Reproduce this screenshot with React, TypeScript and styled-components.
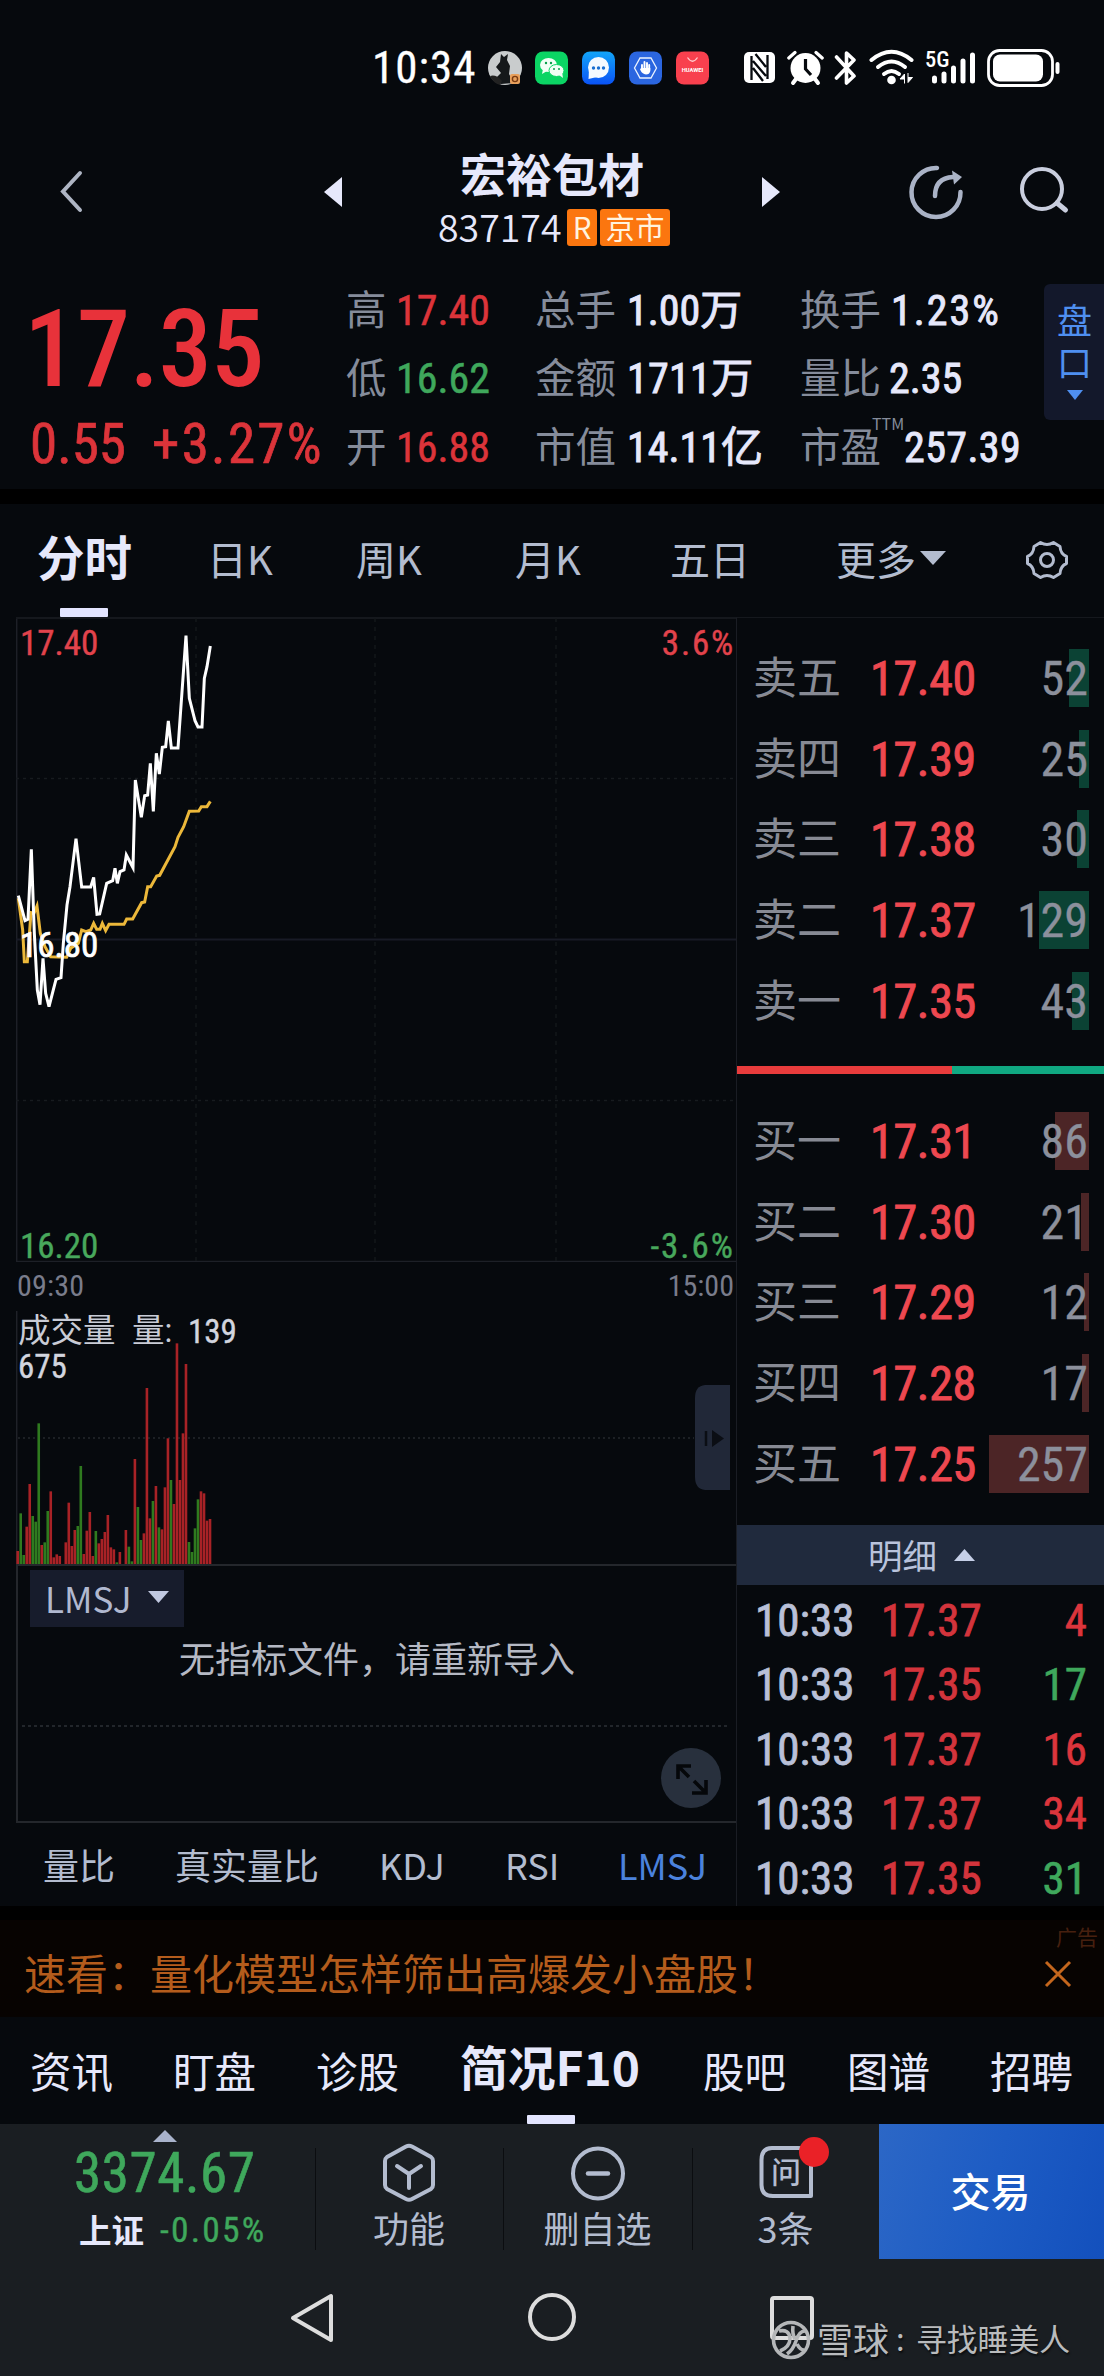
import React from 'react';
import styled, { createGlobalStyle } from 'styled-components';

const NUM = 'Roboto, "Noto Sans CJK SC", sans-serif';
const CJK = '"Noto Sans CJK SC", "Noto Sans", sans-serif';

const c = {
  bg: '#06090d',
  bar: '#1a1e22',
  text: '#e6e8fb',
  soft: '#b3bccf',
  label: '#858c9b',
  red: '#e8323a',
  green: '#3fa85c',
  blue: '#4f8ff0',
  line: '#1a1d24',
};

const Global = createGlobalStyle`
  * { box-sizing: border-box; }
  body { margin: 0; background: ${c.bg}; }
`;

const Screen = styled.div`
  width: 1104px;
  height: 2376px;
  display: flex;
  flex-direction: column;
  background: ${c.bg};
  color: ${c.text};
  font-family: ${CJK};
  line-height: 1;
  white-space: nowrap;
  overflow: hidden;
`;

const Num = styled.span<{ $size: number; $color?: string; $weight?: number; $ls?: number; $stroke?: number }>`
  font-family: ${NUM};
  font-stretch: 75%;
  font-size: ${(p) => p.$size}px;
  font-weight: ${(p) => p.$weight ?? 400};
  color: ${(p) => p.$color ?? c.text};
  letter-spacing: ${(p) => p.$ls ?? 0}px;
  -webkit-text-stroke: ${(p) => p.$stroke ?? 0}px ${(p) => p.$color ?? c.text};
`;

const Gap = styled.div<{ $h: number }>`
  height: ${(p) => p.$h}px;
  flex: none;
  background: #000;
`;

/* ---------- status bar ---------- */

const StatusBar = styled.div`
  height: 104px;
  flex: none;
  padding: 34px 0 0 372px;
  display: flex;
  align-items: flex-start;
`;
const Clock = styled(Num)`
  width: 116px;
  line-height: 68px;
`;
const StatusIcon = styled.svg<{ $w: number; $gap?: number }>`
  flex: none;
  width: ${(p) => p.$w}px;
  height: 68px;
  margin-right: ${(p) => p.$gap ?? 0}px;
`;

function StatusIcons() {
  return (
    <>
      <StatusIcon $w={34} $gap={13} viewBox="0 0 34 68">
        <circle cx="17" cy="34" r="17" fill="#c9cccd" />
        <path d="M13 20 l3 3 4-3 -1 6 3 6 -1 8 5 9 -13 1 -9-6 5-1 4-4 -5-6 4-5z" fill="#15181a" />
        <path d="M2 42 Q8 40 14 47 L12 51 Q5 49 2 42z" fill="#222" />
        <rect x="22" y="40" width="10" height="10" rx="2" fill="#e8a05c" />
        <circle cx="27" cy="45" r="2.600" fill="none" stroke="#7a3b12" strokeWidth="1.400" />
      </StatusIcon>
      <StatusIcon $w={34} $gap={13} viewBox="0 0 34 68">
        <rect y="17.500" width="33" height="33" rx="8" fill="#0bd564" />
        <ellipse cx="13.500" cy="31" rx="8.500" ry="7" fill="#f2fff6" />
        <path d="M8 35 l-1 5 5-3z" fill="#f2fff6" />
        <ellipse cx="21.500" cy="36.500" rx="7.500" ry="6" fill="#f2fff6" stroke="#0bd564" strokeWidth="1" />
        <path d="M24 41 l4 3 -1-6z" fill="#f2fff6" />
        <g fill="#0a9f4b">
          <circle cx="11" cy="29" r="1.200" />
          <circle cx="16" cy="29" r="1.200" />
          <circle cx="19" cy="35" r="1" />
          <circle cx="24" cy="35" r="1" />
        </g>
      </StatusIcon>
      <StatusIcon $w={34} $gap={13} viewBox="0 0 34 68">
        <defs>
          <linearGradient id="msg" x1="0" y1="0" x2="0" y2="1">
            <stop offset="0" stopColor="#12a5f8" />
            <stop offset="1" stopColor="#0a52f5" />
          </linearGradient>
        </defs>
        <rect y="17.500" width="33" height="33" rx="8" fill="url(#msg)" />
        <circle cx="16.500" cy="33.500" r="10.500" fill="#f4faff" />
        <path d="M7 36 L6.500 45 L15 43z" fill="#f4faff" />
        <g fill="#1a6fd0">
          <circle cx="11.500" cy="34" r="1.700" />
          <circle cx="16.500" cy="34" r="1.700" />
          <circle cx="21.500" cy="34" r="1.700" />
        </g>
      </StatusIcon>
      <StatusIcon $w={34} $gap={13} viewBox="0 0 34 68">
        <rect y="17.500" width="33" height="33" rx="8" fill="#2b66e0" />
        <path d="M11 24 H22 L27.500 34 L22 44 H11 L5.500 34 Z" fill="none" stroke="#eaf2ff" strokeWidth="1.300" />
        <path d="M13 31 V36 M15.500 28 V35 M18 29 V35 M20.200 31 V36" stroke="#fff" strokeWidth="1.900" strokeLinecap="round" />
        <path d="M12 34 H21.300 V37 Q20.500 40.500 17 40.500 Q13 40 11 35.500z" fill="#fff" />
      </StatusIcon>
      <StatusIcon $w={34} $gap={34} viewBox="0 0 34 68">
        <rect y="17.500" width="33" height="33" rx="8" fill="#f8404e" />
        <path d="M11.500 23.500 Q16.500 31 21.500 23.500" fill="none" stroke="#ffc9cc" strokeWidth="1.300" />
        <text x="16.500" y="38" textAnchor="middle" fontFamily="Roboto, sans-serif" fontWeight="700" fontSize="5.800" fill="#fff">
          HUAWEI
        </text>
      </StatusIcon>
      <StatusIcon $w={31} $gap={12} viewBox="0 0 31 68">
        <rect y="18" width="31" height="31" rx="5" fill="#fff" />
        <path d="M7.500 46 V22 M23.500 45 V21 M11.500 20 L22 33 M9 27 L22 42 M9 34 L19 47" fill="none" stroke={c.bg} strokeWidth="2.300" />
      </StatusIcon>
      <StatusIcon $w={37} $gap={10} viewBox="0 0 37 68">
        <circle cx="18.500" cy="34" r="15" fill="#fff" />
        <path d="M1.800 24 L8 18.500 M29 18.500 L35.200 24" stroke="#fff" strokeWidth="3.200" strokeLinecap="round" />
        <path d="M9 45 L6 49 M28 45 L31 49" stroke="#fff" strokeWidth="4" strokeLinecap="round" />
        <path d="M18.500 25 V35 L24 41" fill="none" stroke={c.bg} strokeWidth="3.200" />
      </StatusIcon>
      <StatusIcon $w={25} $gap={10} viewBox="0 0 25 68">
        <path d="M2.500 23 L20 42 L12.500 49 V19 L20 26 L2.500 44" fill="none" stroke="#fff" strokeWidth="3.600" strokeLinejoin="round" strokeLinecap="round" />
      </StatusIcon>
      <StatusIcon $w={46} $gap={10} viewBox="0 0 46 68">
        <g fill="none" stroke="#fff" strokeWidth="4" strokeLinecap="round">
          <path d="M2.500 26 Q22.500 9.500 42.500 26" />
          <path d="M9 33 Q22.500 22 36 33" />
          <path d="M15 40 Q22.500 34 30 40" />
        </g>
        <circle cx="22.500" cy="46" r="4.300" fill="#fff" />
        <path d="M35.500 49.500 V40 L31 45 H35.500 M39 39 V48.500 L43.500 43.500 H39" fill="#fff" stroke="#fff" strokeWidth="1" />
      </StatusIcon>
      <StatusIcon $w={51} $gap={11} viewBox="0 0 51 68">
        <text x="0" y="33" fontFamily="Roboto, sans-serif" fontStretch="75%" fontWeight="500" fontSize="22.500" fill="#fff">
          5G
        </text>
        <path d="M9.500 46 V43 M19 46 V39 M28.500 46 V33 M38 46 V26 M47.500 46 V20" transform="translate(0 1)" stroke="#fff" strokeWidth="5" strokeLinecap="round" />
      </StatusIcon>
      <StatusIcon $w={74} viewBox="0 0 74 68">
        <rect x="1.500" y="16.500" width="64" height="35" rx="11" fill="none" stroke="#fff" strokeWidth="2.800" />
        <rect x="6" y="20.500" width="50" height="27" rx="7" fill="#fff" />
        <rect x="68.500" y="28" width="4" height="12" rx="2" fill="#fff" />
      </StatusIcon>
    </>
  );
}

/* ---------- header ---------- */

const Header = styled.header`
  height: 156px;
  flex: none;
  display: grid;
  grid-template-columns: 324px 114px 232px 92px 144px 112px 86px;
`;
const HeadIcon = styled.svg`
  width: 100%;
  height: 156px;
`;
const TitleBox = styled.div`
  padding-top: 43px;
`;
const Title = styled.h1`
  margin: 0 0 0 22px;
  font-size: 46px;
  line-height: 50px;
  font-weight: 700;
`;
const CodeRow = styled.div`
  margin-top: 12px;
  height: 37px;
  display: flex;
  align-items: center;
`;
const Code = styled.span`
  width: 129px;
  flex: none;
  font-size: 37.500px;
  line-height: 37px;
  height: 42px;
  font-weight: 350;
`;
const Badge = styled.span<{ $w: number }>`
  width: ${(p) => p.$w}px;
  flex: none;
  height: 37px;
  margin-right: 3px;
  border-radius: 3px;
  background: #fb760f;
  color: #fff3df;
  font-size: 29.500px;
  line-height: 34px;
  text-align: center;
`;

/* ---------- quote ---------- */

const Quote = styled.section`
  height: 229px;
  flex: none;
  display: grid;
  grid-template-columns: 346px 189px 265px 244px 60px;
`;
const PriceBox = styled.div`
  padding: 27px 0 0 24px;
  display: flex;
  flex-direction: column;
`;
const BigPrice = styled(Num)`
  line-height: 126px;
`;
const Change = styled.div`
  display: grid;
  grid-template-columns: 122px auto;
  margin: 1px 0 0 6px;
  line-height: 60px;
`;
const Stats = styled.div`
  padding-top: 16.500px;
  display: flex;
  flex-direction: column;
`;
const Stat = styled.div<{ $lw: number }>`
  height: 68.500px;
  display: grid;
  grid-template-columns: ${(p) => p.$lw}px auto;
  align-items: center;
`;
const StatLabel = styled.span`
  position: relative;
  font-family: ${NUM};
  font-size: 40.500px;
  color: ${c.label};
`;
const Ttm = styled.sup`
  position: absolute;
  left: 72px;
  top: -13px;
  font-size: 16px;
  font-weight: 400;
  line-height: 16px;
  font-family: "Noto Sans CJK SC", sans-serif;
`;
const SideTab = styled.div`
  height: 136px;
  margin-top: 24px;
  padding-top: 14px;
  border-radius: 6px 0 0 6px;
  background: #13182b;
  color: ${c.blue};
  display: flex;
  flex-direction: column;
  align-items: center;
  font-size: 35px;
  line-height: 42px;
  padding-left: 1px;
`;
const SideArrow = styled.svg`
  width: 16px;
  height: 10px;
  margin-top: 8px;
`;

/* ---------- period tabs ---------- */

const Periods = styled.nav`
  height: 113px;
  flex: none;
  display: grid;
  grid-template-columns: 170px 149px 159px 155px 166px 190px 1fr;
  padding-left: 37px;
`;
const Period = styled.div<{ $on?: boolean }>`
  height: 113px;
  display: flex;
  flex-direction: column;
  font-size: ${(p) => (p.$on ? 47.5 : 40)}px;
  font-weight: ${(p) => (p.$on ? 700 : 400)};
  color: ${(p) => (p.$on ? c.text : c.soft)};
  line-height: 104px;
  padding-top: ${(p) => (p.$on ? 0 : 2)}px;
`;
const Inline = styled.div`
  display: flex;
  align-items: center;
`;
const Underline = styled.i<{ $ml?: number }>`
  display: block;
  width: 48px;
  height: 9px;
  margin-left: ${(p) => p.$ml ?? 0}px;
  background: #e3e5ff;
  flex: none;
  border-radius: 1px;
`;
const Drop = styled.svg`
  width: 26px;
  height: 14px;
  margin-left: 4px;
`;
const GearBox = styled.svg`
  width: 44px;
  height: 44px;
  margin: 34px 0 0 -1px;
`;

/* ---------- main area ---------- */

const Main = styled.main`
  height: 1289px;
  flex: none;
  display: grid;
  grid-template-columns: 736px 368px;
`;
const ChartCol = styled.div`
  display: flex;
  flex-direction: column;
  padding-left: 16px;
`;
const PriceChart = styled.div`
  position: relative;
  height: 645px;
`;
const Plot = styled.svg`
  display: block;
  width: 720px;
  height: 100%;
`;
const AxisLabel = styled(Num)<{ $side: 'l' | 'r'; $top: number }>`
  position: absolute;
  top: ${(p) => p.$top}px;
  ${(p) => (p.$side === 'l' ? 'left: 4px;' : 'right: 1px;')}
`;
const TimeAxis = styled.div`
  height: 49px;
  padding: 9px 2px 0 1px;
  display: flex;
  justify-content: space-between;
`;
const Volume = styled.div`
  position: relative;
  height: 254px;
`;
const VolumeText = styled.div`
  position: absolute;
  left: 2px;
  top: 3px;
`;
const VolumeRow = styled.div`
  height: 35px;
  display: flex;
  align-items: center;
  font-size: 32.500px;
  color: #c9ccd6;
`;
const VolLabel = styled.span<{ $w: number }>`
  font-family: ${NUM};
  width: ${(p) => p.$w}px;
`;
const PullTab = styled.svg`
  position: absolute;
  left: 679px;
  top: 74px;
  width: 35px;
  height: 105px;
`;
const Indicator = styled.div`
  position: relative;
  height: 259px;
  border: 2px solid #24272c;
  border-right: 0;
  margin-top: -1px;
`;
const Picker = styled.button`
  width: 154px;
  height: 57px;
  margin: 4px 0 0 12px;
  padding: 0 0 0 15px;
  border: 0;
  background: #171c2c;
  color: #b0b8d0;
  font: 400 35px/52px ${CJK};
  display: flex;
  align-items: center;
  padding-bottom: 2px;
`;
const PickerArrow = styled.svg`
  width: 21px;
  height: 12px;
  margin: 0 0 2px 16px;
`;
const Notice = styled.p`
  margin: 7px 0 0 161px;
  font-size: 36px;
  line-height: 46px;
  color: #b5b9c4;
`;
const Dotted = styled.div`
  margin: 45px 6px 0 4px;
  height: 2px;
  background: repeating-linear-gradient(90deg, #22262b 0 3px, transparent 3px 6px);
`;
const Expand = styled.svg`
  position: absolute;
  left: 643px;
  top: 182px;
  width: 60px;
  height: 60px;
`;
const IndTabs = styled.div`
  flex: 1;
  display: grid;
  grid-template-columns: 132px 204px 126px 113px auto;
  padding: 0 0 8px 27px;
  align-items: center;
`;
const IndTab = styled.span<{ $on?: boolean }>`
  font-size: 36px;
  color: ${(p) => (p.$on ? '#4b82dc' : c.soft)};
`;

/* ---------- order book ---------- */

const Book = styled.aside`
  display: flex;
  flex-direction: column;
  border-left: 1px solid ${c.line};
  border-top: 1px solid #15181d;
  border-bottom: 2px solid #1c1f22;
`;
const Levels = styled.div<{ $top: number; $h: number }>`
  height: ${(p) => p.$h}px;
  padding-top: ${(p) => p.$top}px;
`;
const Level = styled.div`
  height: 80.600px;
  display: grid;
  grid-template-columns: 117px 121px 97px;
  padding-left: 16px;
  align-items: center;
`;
const LevelName = styled.span`
  font-family: ${NUM};
  font-size: 44px;
  padding-top: 2px;
  color: #878a94;
`;
const LevelPrice = styled(Num)`
  padding-top: 2px;
`;
const LevelVol = styled.div`
  position: relative;
  height: 58px;
  line-height: 60px;
  text-align: right;
`;
const VolBar = styled.i<{ $buy?: boolean }>`
  position: absolute;
  right: -1px;
  top: 0;
  height: 58px;
  background: ${(p) => (p.$buy ? '#4c2526' : '#0b4234')};
`;
const VolNum = styled(Num)`
  position: relative;
`;
const Split = styled.div`
  display: grid;
  grid-template-columns: 215px 1fr;
  height: 8px;
`;
const SplitPart = styled.i<{ $c: string }>`
  background: ${(p) => p.$c};
`;
const DetailHead = styled.div`
  height: 60px;
  display: flex;
  align-items: center;
  padding: 0 0 3px 131px;
  background: #202a3d;
  color: #b9c3dc;
  font-size: 34.500px;
  line-height: 54px;
`;
const DetailArrow = styled.svg`
  width: 21px;
  height: 12px;
  margin: 2px 0 0 17px;
`;
const Trades = styled.div`
  padding-top: 3px;
`;
const Trade = styled.div`
  height: 64.500px;
  display: grid;
  grid-template-columns: 126px 120px 86px;
  padding-left: 18px;
  align-items: center;
`;
const TradeVol = styled(Num)`
  text-align: right;
`;

/* ---------- advert ---------- */

const Advert = styled.section`
  height: 97px;
  flex: none;
  display: grid;
  grid-template-columns: 1044px 60px;
  background: #070301;
`;
const AdText = styled.span`
  padding-left: 24px;
  font-size: 42px;
  line-height: 103px;
  color: #b45c1c;
`;
const AdSide = styled.div`
  display: flex;
  flex-direction: column;
  padding-top: 5px;
  font-size: 21px;
  line-height: 23px;
  color: #47200f;
`;
const AdTag = styled.span`
  padding-left: 12px;
`;
const AdClose = styled.svg`
  width: 28px;
  height: 28px;
  margin-top: 12px;
`;

/* ---------- section tabs ---------- */

const Sections = styled.nav`
  height: 107px;
  flex: none;
  padding-left: 30px;
  display: grid;
  grid-template-columns: 143px 143px 144px 243px 144px 143px auto;
`;
const Section = styled.div<{ $on?: boolean }>`
  font-size: ${(p) => (p.$on ? 47.8 : 41.5)}px;
  font-weight: ${(p) => (p.$on ? 700 : 400)};
  line-height: 98px;
  padding-top: ${(p) => (p.$on ? 0 : 4)}px;
  height: 107px;
  overflow: hidden;
  display: flex;
  flex-direction: column;
`;

/* ---------- bottom bar ---------- */

const Bottom = styled.footer`
  height: 135px;
  flex: none;
  background: ${c.bar};
  display: grid;
  grid-template-columns: 315px 188px 189px 187px 225px;
`;
const IndexBox = styled.div`
  display: flex;
  flex-direction: column;
  padding: 6px 0 0 74px;
`;
const IndexArrow = styled.svg`
  width: 24px;
  height: 12px;
  margin: 0 0 1px 79px;
`;
const IndexValue = styled(Num)`
  line-height: 60px;
`;
const IndexRow = styled.div`
  display: grid;
  grid-template-columns: 81px auto;
  align-items: center;
  padding-left: 5px;
  line-height: 48px;
`;
const IndexName = styled.b`
  font-family: ${NUM};
  font-size: 32.500px;
  padding-top: 5px;
`;
const Action = styled.div`
  position: relative;
  display: flex;
  flex-direction: column;
  align-items: center;
  padding-top: 18px;
  font-size: 36px;
  line-height: 50px;
  color: ${c.soft};
  &::before {
    content: '';
    position: absolute;
    left: 0;
    top: 24px;
    width: 1px;
    height: 102px;
    background: #0b0d10;
  }
`;
const ActionIcon = styled.svg`
  width: 80px;
  height: 60px;
  overflow: visible;
`;
const TradeBtn = styled.button`
  border: 0;
  background: linear-gradient(105deg, #2c67c6 0%, #1d5cc4 50%, #1350bd 100%);
  color: #fff;
  font: 500 40px/130px ${CJK};
  padding: 0 2px 4px 0;
`;

/* ---------- system nav ---------- */

const SysNav = styled.div`
  height: 117px;
  flex: none;
  background: ${c.bar};
  display: grid;
  grid-template-columns: 816px 288px;
`;
const SysIcons = styled.svg`
  width: 816px;
  height: 117px;
`;
const Watermark = styled.div`
  padding: 56px 0 0 1px;
  display: grid;
  grid-template-columns: 72px 27px auto;
  align-content: start;
  align-items: center;
  line-height: 46px;
  color: #b9bbbd;
  font-size: 30.800px;
  text-shadow: 1px 2px 2px rgba(0, 0, 0, 0.6);
`;
const Brand = styled.span`
  font-size: 36px;
`;
const Colon = styled.span`
  padding-left: 7px;
`;

/* ---------- data ---------- */

const sells: [string, string, number][] = [
  ['卖五', '17.40', 52],
  ['卖四', '17.39', 25],
  ['卖三', '17.38', 30],
  ['卖二', '17.37', 129],
  ['卖一', '17.35', 43],
];
const buys: [string, string, number][] = [
  ['买一', '17.31', 86],
  ['买二', '17.30', 21],
  ['买三', '17.29', 12],
  ['买四', '17.28', 17],
  ['买五', '17.25', 257],
];
const trades: [string, string, number, boolean][] = [
  ['10:33', '17.37', 4, true],
  ['10:33', '17.35', 17, false],
  ['10:33', '17.37', 16, true],
  ['10:33', '17.37', 34, true],
  ['10:33', '17.35', 31, false],
];
const priceLine =
  '55,887 75,962 84,958 94,748 103,1000 112,1170 120,1214 129,1075 137,1180 147,1220 168,1138 183,1133 190,1030 201,915 210,860 228,716 245,861 272,861 281,832 291,943 299,942 320,850 338,842 345,805 352,850 360,815 372,810 379,765 399,803 406,540 424,652 434,587 443,585 451,490 460,634 469,460 478,522 487,442 497,440 505,363 514,444 534,444 558,107 568,295 585,362 594,381 606,381 613,235 621,200 631,138';
const avgLine =
  '55,895 68,990 73,1085 82,1085 93,938 102,940 111,918 121,1000 135,1040 152,1070 200,1072 212,1045 235,1030 245,990 258,995 272,990 281,970 290,988 300,988 307,970 317,992 327,973 372,973 380,957 398,957 425,908 434,906 443,860 452,860 470,828 479,826 525,740 534,712 551,680 568,634 596,633 604,620 621,620 631,604';
/* one entry per minute: height in thirds of a pixel, negative for a falling minute */
const volumes = [
  42, -155, -30, 115, 243, -147, -130, -425, 60, -68, -162, 221, 23, 32, 27, -3, 68, 187, 57, 105, -117, -297, 33, 103, 159, 27,
  -102, 65, 78, 99, 150, 53, 47, -8, 39, 3, 105, -55, -11, 318, -174, -75, 95, 531, 140, -192, 237, -113, 107, 233, 380, -255, 183,
  665, 255, 395, 603, -69, -39, -110, -197, 221, 215, 133, 138,
];

function Levels5({ rows, buy, top, h }: { rows: typeof sells; buy?: boolean; top: number; h: number }) {
  return (
    <Levels $top={top} $h={h}>
      {rows.map(([name, price, vol]) => (
        <Level key={name}>
          <LevelName>{name}</LevelName>
          <LevelPrice $size={48} $color="#ee4850" $stroke={0.9} $ls={-0.3}>{price}</LevelPrice>
          <LevelVol>
            <VolBar $buy={buy} style={{ width: Math.round(vol * 0.39) }} />
            <VolNum $size={48} $color="#8c909c" $stroke={0.3}>{vol}</VolNum>
          </LevelVol>
        </Level>
      ))}
    </Levels>
  );
}

interface StatProps {
  lw: number;
  label: string;
  value: string;
  color?: string;
  sup?: string;
  ls?: number;
}

function StatCell({ lw, label, value, color, sup, ls = 0 }: StatProps) {
  return (
    <Stat $lw={lw}>
      <StatLabel>
        {label}
        {sup && <Ttm>{sup}</Ttm>}
      </StatLabel>
      <Num $size={42} $stroke={color ? 0.5 : 0.9} $color={color} $ls={ls}>{value}</Num>
    </Stat>
  );
}

export default function App() {
  return (
    <Screen>
      <Global />
      <StatusBar>
        <Clock $size={45} $color="#fff" $ls={1} $stroke={0.3}>10:34</Clock>
        <StatusIcons />
      </StatusBar>

      <Header>
        <HeadIcon viewBox="0 0 324 156">
          <path d="M80 69 L63 87.500 L80 106" fill="none" stroke="#aeb5c3" strokeWidth="4" strokeLinecap="round" />
        </HeadIcon>
        <HeadIcon viewBox="0 0 114 156">
          <path d="M0 88 L18 73 V103z" fill={c.text} />
        </HeadIcon>
        <TitleBox>
          <Title>宏裕包材</Title>
          <CodeRow>
            <Code>837174</Code>
            <Badge $w={30}>R</Badge>
            <Badge $w={70}>京市</Badge>
          </CodeRow>
        </TitleBox>
        <HeadIcon viewBox="0 0 92 156" />
        <HeadIcon viewBox="0 0 144 156">
          <path d="M18 88 L0 73 V103z" fill={c.text} />
        </HeadIcon>
        <HeadIcon viewBox="906 104 112 156">
          <g fill="none" stroke="#aab3c6" strokeWidth="4.500" strokeLinecap="round">
            <path d="M937 168 A24.500 24.500 0 1 0 960.500 192" />
            <path d="M935 196 Q935 178 953 177" />
          </g>
          <path d="M952 170.500 L962 177 L954 184.500z" fill="#aab3c6" />
        </HeadIcon>
        <HeadIcon viewBox="1018 104 86 156">
          <circle cx="1042" cy="189" r="20" fill="none" stroke="#c9cede" strokeWidth="4" />
          <path d="M1057 203 L1065.500 210" stroke="#c9cede" strokeWidth="5" strokeLinecap="round" />
        </HeadIcon>
      </Header>

      <Quote>
        <PriceBox>
          <BigPrice $size={107} $weight={500} $color={c.red} $ls={-0.8}>17.35</BigPrice>
          <Change>
            <Num $size={55} $color="#dc343a" $stroke={0.7}>0.55</Num>
            <Num $size={55} $color="#dc343a" $stroke={0.7} $ls={2.3}>+3.27%</Num>
          </Change>
        </PriceBox>
        <Stats>
          <StatCell lw={50} label="高" value="17.40" color="#dc343a" />
          <StatCell lw={50} label="低" value="16.62" color={c.green} />
          <StatCell lw={50} label="开" value="16.88" color="#dc343a" />
        </Stats>
        <Stats>
          <StatCell lw={92} label="总手" value="1.00万" />
          <StatCell lw={92} label="金额" value="1711万" ls={0.3} />
          <StatCell lw={92} label="市值" value="14.11亿" />
        </Stats>
        <Stats>
          <StatCell lw={91} label="换手" value="1.23%" ls={2} />
          <StatCell lw={89} label="量比" value="2.35" />
          <StatCell lw={104} label="市盈" value="257.39" sup="TTM" ls={0.4} />
        </Stats>
        <SideTab>
          <span>盘</span>
          <span>口</span>
          <SideArrow viewBox="0 0 16 10">
            <path d="M0 0 H16 L8 10z" fill={c.blue} />
          </SideArrow>
        </SideTab>
      </Quote>
      <Gap $h={15} />

      <Periods>
        <Period $on>
          分时
          <Underline $ml={23} />
        </Period>
        <Period>日K</Period>
        <Period>周K</Period>
        <Period>月K</Period>
        <Period>五日</Period>
        <Period>
          <Inline>
            更多
            <Drop viewBox="0 0 26 14">
              <path d="M0 0 H26 L13 14z" fill={c.soft} />
            </Drop>
          </Inline>
        </Period>
        <GearBox viewBox="0 0 44 44">
          <g fill="none" stroke={c.soft} strokeWidth="3" strokeLinejoin="round">
            <path d="M15.500 4.500 Q22 8.500 28.500 4.500 L35 8.500 Q35.500 16 41.500 18.500 V25.500 Q35.500 28 35 35.500 L28.500 39.500 Q22 35.500 15.500 39.500 L9 35.500 Q8.500 28 2.500 25.500 V18.500 Q8.500 16 9 8.500z" />
            <circle cx="22" cy="22" r="6.500" />
          </g>
        </GearBox>
      </Periods>

      <Main>
        <ChartCol>
          <PriceChart>
            <Plot viewBox="16 617 720 645">
              <g fill="none" strokeWidth="1.500">
                <path d="M16.700 617 V1261.500 H736" stroke="#1d2027" />
                <path d="M16 618 H736" stroke="#15181d" strokeWidth="2" />
                <path d="M16 939.500 H736" stroke="#181b26" strokeWidth="2" />
                <path d="M16 778.500 H736 M16 1100.500 H736" stroke="#171b1f" strokeDasharray="3 4" />
                <path d="M196 618 V1261 M375 618 V1261 M556 618 V1261" stroke="#13171a" strokeDasharray="4 5" />
              </g>
              <g transform="translate(0 600) scale(0.33333)" fill="none" strokeWidth="9" strokeLinejoin="miter">
                <polyline points={avgLine} stroke="#ecb83a" />
                <polyline points={priceLine} stroke="#fff" />
              </g>
            </Plot>
            <AxisLabel $side="l" $top={9} $size={35} $stroke={0.4} $color="#e2434c">17.40</AxisLabel>
            <AxisLabel $side="r" $top={9} $size={35} $stroke={0.4} $ls={1.8} $color="#e2434c">3.6%</AxisLabel>
            <AxisLabel $side="l" $top={311} $size={35} $stroke={0.7} $color="#fff">16.80</AxisLabel>
            <AxisLabel $side="l" $top={612} $size={35} $stroke={0.4} $color="#48a85c">16.20</AxisLabel>
            <AxisLabel $side="r" $top={612} $size={35} $stroke={0.4} $ls={2} $color="#48a85c">-3.6%</AxisLabel>
          </PriceChart>
          <TimeAxis>
            <Num $size={30} $color="#797c8b" $ls={0.2}>09:30</Num>
            <Num $size={30} $color="#797c8b">15:00</Num>
          </TimeAxis>
          <Volume>
            <Plot viewBox="16 1311 720 254">
              <path d="M16.700 1311 V1565" stroke="#1f2228" strokeWidth="1.500" />
              <path d="M18 1438 H694" stroke="#1c2024" strokeWidth="2" strokeDasharray="2 3" />
              {volumes.map((v, i) => (
                <rect
                  key={i}
                  x={16.4 + i * 3.005}
                  y={1565 - Math.abs(v) / 3}
                  width="2.600"
                  height={Math.abs(v) / 3}
                  fill={v > 0 ? '#a82226' : '#2f7a1f'}
                />
              ))}
            </Plot>
            <VolumeText>
              <VolumeRow>
                <VolLabel $w={114}>成交量</VolLabel>
                <VolLabel $w={56}>量:</VolLabel>
                <Num $size={33} $stroke={0.4} $color="#d2d5df">139</Num>
              </VolumeRow>
              <VolumeRow>
                <Num $size={33} $stroke={0.4} $color="#d2d5df">675</Num>
              </VolumeRow>
            </VolumeText>
            <PullTab viewBox="0 0 35 105">
              <path d="M35 0 V105 H10 Q0 104 0 92 V13 Q0 1 10 0z" fill="#212838" />
              <path d="M11 46 V61" stroke="#0b0e14" strokeWidth="2.500" />
              <path d="M17 45 L29 53.500 L17 62z" fill="#0b0e14" />
            </PullTab>
          </Volume>
          <Indicator>
            <Picker>
              LMSJ
              <PickerArrow viewBox="0 0 21 12">
                <path d="M0 0 H21 L10.500 12z" fill="#c0c8e0" />
              </PickerArrow>
            </Picker>
            <Notice>无指标文件，请重新导入</Notice>
            <Dotted />
            <Expand viewBox="0 0 60 60">
              <circle cx="30" cy="30" r="30" fill="#28303d" />
              <g fill="none" stroke="#05070a" strokeWidth="3.600">
                <path d="M17 31 V18 H30 M17 18 L28 29" />
                <path d="M45 32 V45 H31 M45 45 L33 33" />
              </g>
            </Expand>
          </Indicator>
          <IndTabs>
            <IndTab>量比</IndTab>
            <IndTab>真实量比</IndTab>
            <IndTab>KDJ</IndTab>
            <IndTab>RSI</IndTab>
            <IndTab $on>LMSJ</IndTab>
          </IndTabs>
        </ChartCol>

        <Book>
          <Levels5 rows={sells} top={20} h={448} />
          <Split>
            <SplitPart $c="#e83c3c" />
            <SplitPart $c="#10a982" />
          </Split>
          <Levels5 rows={buys} buy top={27} h={451} />
          <DetailHead>
            明细
            <DetailArrow viewBox="0 0 21 12">
              <path d="M0 12 H21 L10.500 0z" fill="#c6d0e8" />
            </DetailArrow>
          </DetailHead>
          <Trades>
            {trades.map(([time, price, vol, up], i) => (
              <Trade key={i}>
                <Num $size={45} $color="#b9c0d8" $stroke={0.8}>{time}</Num>
                <Num $size={45} $color="#d3343c" $stroke={0.8}>{price}</Num>
                <TradeVol $size={45} $color={up ? '#dc353c' : c.green} $stroke={0.6}>{vol}</TradeVol>
              </Trade>
            ))}
          </Trades>
        </Book>
      </Main>
      <Gap $h={14} />

      <Advert>
        <AdText>速看：量化模型怎样筛出高爆发小盘股！</AdText>
        <AdSide>
          <AdTag>广告</AdTag>
          <AdClose viewBox="0 0 28 28">
            <path d="M2 2 L26 26 M26 2 L2 26" stroke="#c4661d" strokeWidth="3" />
          </AdClose>
        </AdSide>
      </Advert>

      <Sections>
        <Section>资讯</Section>
        <Section>盯盘</Section>
        <Section>诊股</Section>
        <Section $on>
          简况F10
          <Underline $ml={67} />
        </Section>
        <Section>股吧</Section>
        <Section>图谱</Section>
        <Section>招聘</Section>
      </Sections>

      <Bottom>
        <IndexBox>
          <IndexArrow viewBox="0 0 24 12">
            <path d="M0 12 H24 L12 0z" fill="#a9b3cc" />
          </IndexArrow>
          <IndexValue $size={55} $color={c.green} $ls={0.6} $stroke={0.6}>3374.67</IndexValue>
          <IndexRow>
            <IndexName>上证</IndexName>
            <Num $size={35.5} $color={c.green} $ls={2.2} $stroke={0.4}>-0.05%</Num>
          </IndexRow>
        </IndexBox>
        <Action>
          <ActionIcon viewBox="0 0 80 60">
            <g fill="none" stroke={c.soft} strokeWidth="4" strokeLinejoin="round" strokeLinecap="round">
              <path d="M37 4.500 Q40 3 43 4.500 L62 15 Q64 16.500 64 19 V43 Q64 45.500 62 47 L43 57 Q40 58.500 37 57 L18 47 Q16 45.500 16 43 V19 Q16 16.500 18 15z" />
              <path d="M28 24 L40 32 L52 24 M40 32 V46" />
            </g>
          </ActionIcon>
          功能
        </Action>
        <Action>
          <ActionIcon viewBox="0 0 80 60">
            <circle cx="40" cy="31.500" r="25" fill="none" stroke={c.soft} strokeWidth="4" />
            <path d="M30 31.500 H50" stroke={c.soft} strokeWidth="4.500" strokeLinecap="round" />
          </ActionIcon>
          删自选
        </Action>
        <Action>
          <ActionIcon viewBox="0 0 80 60">
            <path d="M26 6 H52 Q65 6 65 18 V54 H27 Q15.500 54 15.500 43 V18 Q15.500 6 26 6z" fill="none" stroke={c.soft} strokeWidth="4" strokeLinejoin="round" />
            <text x="40" y="41" textAnchor="middle" fontFamily='"Noto Sans CJK SC", sans-serif' fontWeight="500" fontSize="30" fill={c.soft}>
              问
            </text>
            <circle cx="68" cy="10" r="15" fill="#ea2127" />
          </ActionIcon>
          3条
        </Action>
        <TradeBtn>交易</TradeBtn>
      </Bottom>

      <SysNav>
        <SysIcons viewBox="0 2259 816 117">
          <g fill="none" stroke="#ddd" strokeWidth="4" strokeLinejoin="round">
            <path d="M331 2296 V2340 L293 2318z" />
            <circle cx="552" cy="2317" r="22" />
            <rect x="772" y="2298" width="40" height="40" rx="2" />
          </g>
          <g fill="none" stroke="#b5b7b9" strokeWidth="3.600">
            <circle cx="791" cy="2340" r="17.500" />
            <path d="M779 2331 Q789 2329 790 2338 Q790 2347 780 2351 M787 2354 Q793 2350 796 2341 Q799 2331 805 2331 M793 2326 Q792 2334 795 2339 M797 2344 Q800 2350 804 2350" />
          </g>
        </SysIcons>
        <Watermark>
          <Brand>雪球</Brand>
          <Colon>:</Colon>
          <span>寻找睡美人</span>
        </Watermark>
      </SysNav>
    </Screen>
  );
}
